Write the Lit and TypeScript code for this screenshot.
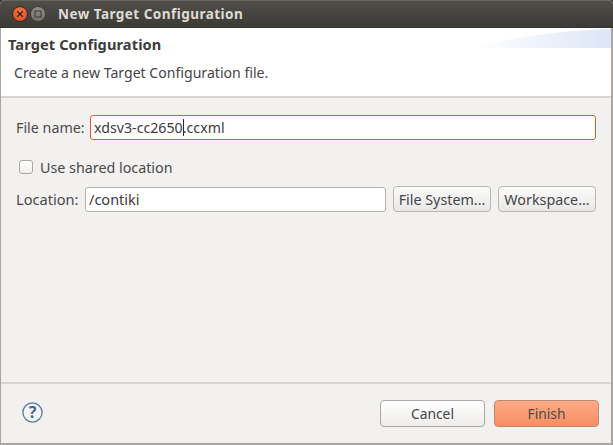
import { LitElement, html, css } from "lit";
import { customElement } from "lit/decorators.js";

@customElement("app-root")
export class AppRoot extends LitElement {
  static styles = css`
    :host { display: block; width: 613px; height: 445px; font-family: "Noto Sans", "Open Sans", sans-serif; font-size: 14px; color: #3c3c3c; background: #3c3b37; }
    * { box-sizing: border-box; }
    .window { width: 613px; height: 445px; display: flex; flex-direction: column; overflow: hidden; border-radius: 5px 5px 0 0; background: #f2f1f0; }
    .titlebar { height: 28px; flex: none; display: flex; align-items: center; padding: 0 0 0 12px; background: linear-gradient(#4f4e49, #3c3b37); border-top: 1px solid #65645e; border-bottom: 1px solid #33322e; }
    .wbtn { width: 16px; height: 16px; border-radius: 50%; display: flex; align-items: center; justify-content: center; flex: none; }
    .close { background: radial-gradient(circle at 50% 35%, #f2784a, #d9481c); border: 1px solid #3a2a22; }
    .max { margin-left: 2px; background: linear-gradient(#8f8e88, #72716b); border: 1px solid #403f3b; }
    .wtitle { margin-left: 12px; color: #dfdbd2; font-weight: 700; font-size: 13.5px; letter-spacing: 0.47px; white-space: nowrap; }
    .content { flex: 1; display: flex; flex-direction: column; border-left: 1px solid #a8a7a3; border-right: 2px solid #a8a7a3; border-bottom: 2px solid #a8a7a3; min-height: 0; }
    .header { height: 70px; flex: none; background: #fff; border-bottom: 2px solid #d6d5d3; position: relative; padding: 7px 0 0 7px; overflow: hidden; }
    .banner { position: absolute; right: 0; top: 0; width: 140px; height: 20px; }
    .htitle { font-weight: 700; font-size: 14.6px; line-height: 18px; color: #3c3c3c; position: relative; letter-spacing: 0.1px; }
    .hsub { margin: 11px 0 0 6px; font-size: 14.1px; line-height: 18px; color: #45454a; position: relative; }
    .form { flex: 1; padding: 17px 15px 0 15px; display: flex; flex-direction: column; }
    .row { display: flex; align-items: center; }
    .label { white-space: nowrap; font-size: 14.3px; color: #4a4a4a; }
    .name { width: 67px; flex: none; }
    .locname { width: 63px; flex: none; font-size: 14.6px; }
    .field { height: 25px; background: #fff; border: 1px solid #b4b3ae; border-radius: 3px; display: flex; align-items: center; padding: 0 0 0 3px; font-size: 14.2px; color: #3c3c3c; white-space: nowrap; }
    .focus { width: 506px; margin-left: 7px; border-color: #e05a2b; }
    .caret { display: inline-block; width: 1px; height: 17px; background: #2c2c2c; vertical-align: -3px; margin-right: -1px; }
    .check { margin-top: 20px; padding-left: 3px; height: 14px; }
    .box { width: 14px; height: 14px; border: 1px solid #a9a8a3; border-radius: 3px; background: linear-gradient(#fff, #f1f0ee); flex: none; }
    .check .label { margin-left: 7px; }
    .loc { margin-top: 12px; }
    .loc .field { width: 301px; margin-left: 6px; font-size: 14.5px; }
    .btn { height: 26px; width: 98px; border: 1px solid #b8b7b2; border-radius: 4px; background: linear-gradient(#fbfbfa, #e9e8e6); display: flex; align-items: center; justify-content: center; font-size: 14.3px; color: #45454a; white-space: nowrap; font-family: inherit; padding: 0; }
    .loc .btn { margin-left: 7px; }
    .footer { height: 61px; flex: none; border-top: 2px solid #d6d5d3; padding: 16px 12px 0 20px; display: flex; align-items: flex-start; justify-content: flex-end; gap: 9px; position: relative; }
    .help { margin: 2px auto 0 1px; width: 21px; height: 21px; flex: none; display: block; }
    .wide { width: 105px; height: 27px; font-size: 13.8px; }
    .cancel { background: linear-gradient(#fff, #eeedeb); border-color: #a9a8a3; }
    .finish { background: linear-gradient(#fdaa87, #f98d62); border-color: #b98a74; color: #4f4a47; }
  `;

  render() {
    return html`
      <div class="window">
        <div class="titlebar">
          <div class="wbtn close">
            <svg width="8" height="8" viewBox="0 0 8 8"><path d="M1.2 1.2 6.8 6.8M6.8 1.2 1.2 6.8" stroke="#3a2018" stroke-width="1.4" fill="none"/></svg>
          </div>
          <div class="wbtn max">
            <svg width="8" height="8" viewBox="0 0 8 8"><rect x="1" y="1" width="6" height="6" stroke="#44433f" stroke-width="1.2" fill="none"/></svg>
          </div>
          <div class="wtitle">New Target Configuration</div>
        </div>
        <div class="content">
          <div class="header">
            <svg class="banner" viewBox="0 0 140 20" preserveAspectRatio="none">
              <defs>
                <linearGradient id="g" x1="0" x2="1" y1="0" y2="0">
                  <stop offset="0" stop-color="#ffffff"/>
                  <stop offset="1" stop-color="#dde5f6"/>
                </linearGradient>
              </defs>
              <path d="M0 20C40 10 90 2 140 1V20Z" fill="url(#g)"/>
            </svg>
            <div class="htitle">Target Configuration</div>
            <div class="hsub">Create a new Target Configuration file.</div>
          </div>
          <div class="form">
            <div class="row">
              <span class="label name">File name:</span>
              <div class="field focus">xdsv3-cc2650<span class="caret"></span>.ccxml</div>
            </div>
            <div class="row check">
              <div class="box"></div>
              <span class="label">Use shared location</span>
            </div>
            <div class="row loc">
              <span class="label locname">Location:</span>
              <div class="field">/contiki</div>
              <button class="btn">File System...</button>
              <button class="btn">Workspace...</button>
            </div>
          </div>
          <div class="footer">
            <svg class="help" viewBox="0 0 21 21">
              <circle cx="10.5" cy="10.5" r="9.6" fill="#f4f4f4" stroke="#5878a3" stroke-width="1.3"/>
              <text x="10.5" y="16" text-anchor="middle" font-family="Noto Sans" font-weight="700" font-size="16" fill="#4a6590">?</text>
            </svg>
            <button class="btn wide cancel">Cancel</button>
            <button class="btn wide finish">Finish</button>
          </div>
        </div>
      </div>
    `;
  }
}
